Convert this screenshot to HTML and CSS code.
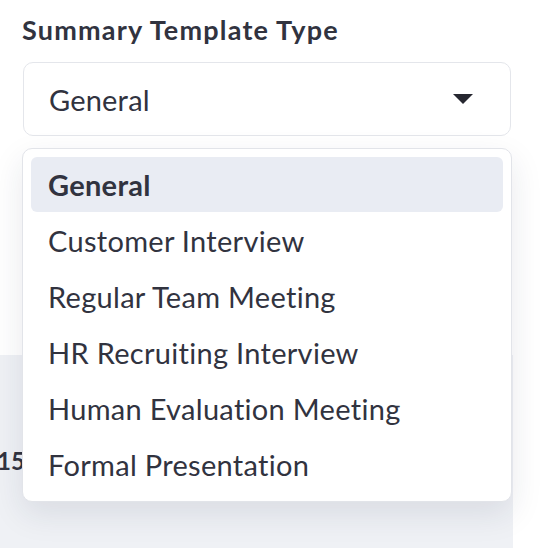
FILE: index.html
```html
<html>
   <head>
      <title>Summary Template Type</title>
      <meta name="viewport" content="initial-scale=1, maximum-scale=1">
      <link rel="stylesheet" href="styles.css">
   </head>
   <body>
      <div class="field">
         <label class="field-label">Summary Template Type</label>
         <div class="select">
            <span class="select-value">General</span>
            <svg class="caret" width="20" height="10" viewBox="0 0 20 10">
               <path d="M0 0h20L10 10z" fill="#262730"></path>
            </svg>
         </div>
         <ul class="menu">
            <li class="option active">General</li>
            <li class="option">Customer Interview</li>
            <li class="option">Regular Team Meeting</li>
            <li class="option">HR Recruiting Interview</li>
            <li class="option">Human Evaluation Meeting</li>
            <li class="option">Formal Presentation</li>
         </ul>
      </div>
      <div class="panel">
         <span class="panel-num">15</span>
      </div>
   </body>
</html>
```

FILE: styles.css
```css
*{
   box-sizing: border-box;
   font-family: 'Lato', sans-serif;
}
body{
    margin: 0;
    background: #fff;
    color: #31333f;
}
.field{
    position: relative;
    padding: 13px 31px 0 23px;
    height: 355px;
}
.field-label{
    display: block;
    font-weight: 700;
    font-size: 27px;
    letter-spacing: 1.2px;
    line-height: 34px;
    margin-left: -1px;
    margin-bottom: 15px;
}
.select{
    display: flex;
    align-items: center;
    height: 74px;
    padding: 0 37px 0 25px;
    border: 1px solid #e4e6eb;
    border-radius: 10px;
    background: #fff;
}
.select-value{
    flex: 1;
    font-size: 29px;
    letter-spacing: 0.2px;
}
.caret{
    display: block;
}
.menu{
    position: absolute;
    z-index: 2;
    top: 148px;
    left: 22px;
    width: 490px;
    margin: 0;
    padding: 8px;
    list-style: none;
    background: #fff;
    border: 1px solid #e2e4e9;
    border-radius: 10px;
    box-shadow: 0 12px 32px rgba(30, 40, 70, 0.10);
}
.option{
    height: 56px;
    line-height: 56px;
    padding-left: 17px;
    font-size: 29px;
    letter-spacing: 0.3px;
    border-radius: 6px;
}
.option.active{
    font-weight: 700;
    background: #e9ecf3;
    height: 55px;
    margin-bottom: 1px;
}
.panel{
    width: 513px;
    height: 193px;
    background: #eff1f5;
    padding-top: 93px;
}
.panel-num{
    display: block;
    margin-left: -3px;
    font-weight: 700;
    font-size: 24px;
    line-height: 26px;
}
```
